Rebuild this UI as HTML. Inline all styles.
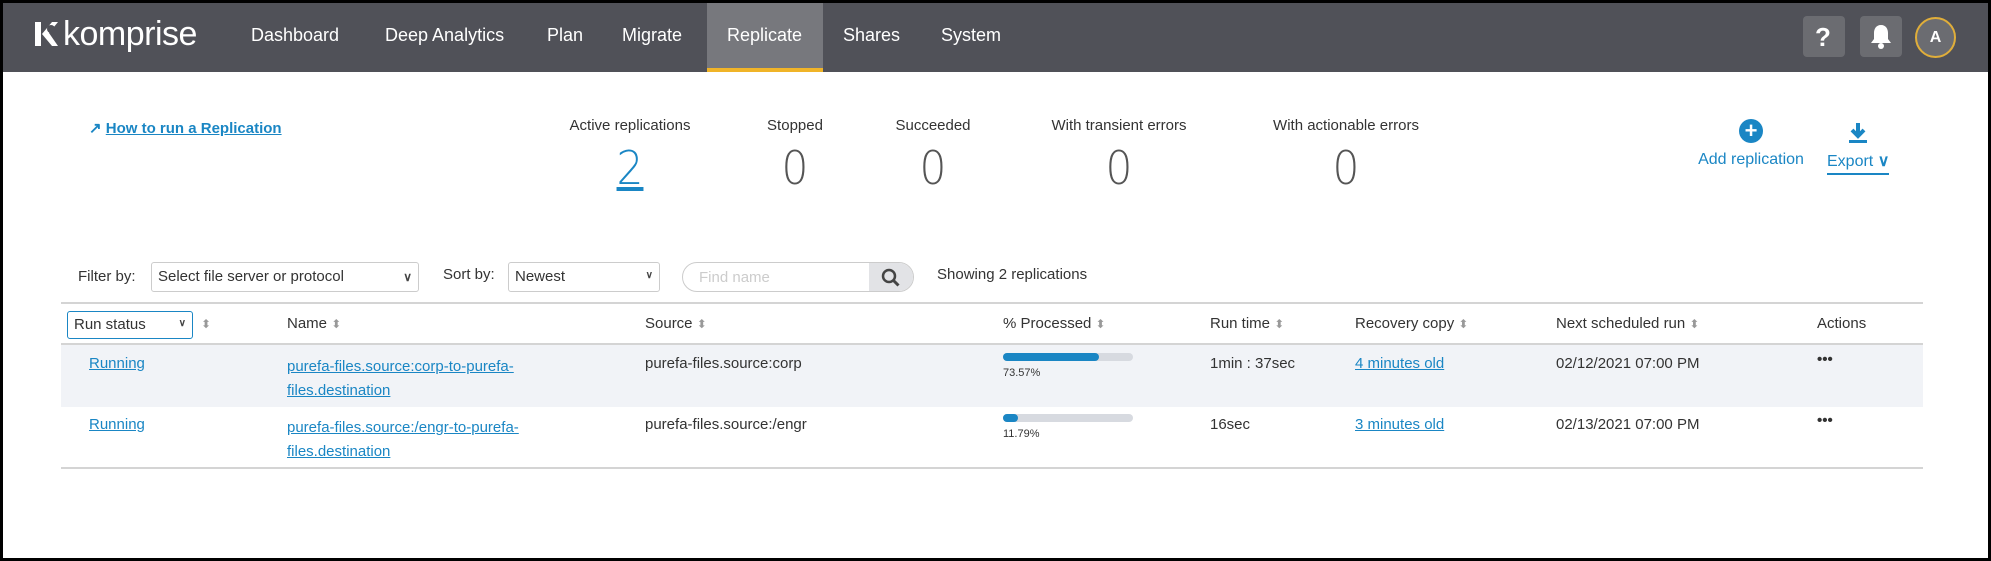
<!DOCTYPE html>
<html><head><meta charset="utf-8"><style>
*{box-sizing:border-box;margin:0;padding:0}
body{width:1991px;height:561px;background:#000;font-family:"Liberation Sans",sans-serif;position:relative;overflow:hidden}
.page{position:absolute;left:3px;top:3px;width:1985px;height:555px;background:#fff}
.hdr{position:absolute;left:0;top:0;width:1985px;height:69px;background:#505158}
.abs{position:absolute;white-space:nowrap}
.nav{color:#fff;font-size:18px;top:22px}
.tab{position:absolute;left:704px;top:0;width:116px;height:69px;background:#77787d;border-bottom:4px solid #f0b428}
.ib{position:absolute;top:13px;width:42px;height:41px;background:#6b6c71;border-radius:4px}
.lbl{font-size:15px;color:#333;transform:translateX(-50%)}
.num{font-size:46px;color:#555;font-family:"DejaVu Sans",sans-serif;font-weight:200;transform:translateX(-50%) scaleX(0.92);top:138px}
.t{font-size:15px;color:#333}
a,.lnk{color:#1a86c4 !important;text-decoration:underline}
.sel{position:absolute;border:1px solid #ccc;border-radius:3px;background:#fff;font-size:15px;color:#333;padding:5px 6px}
.line{position:absolute;left:58px;width:1862px;height:2px;background:#d4d4d4}
.bar{position:absolute;left:1000px;width:130px;height:8px;background:#d7dae0;border-radius:4px}
.bar i{display:block;height:8px;background:#1a86c4;border-radius:4px}
.pct{font-size:11px;color:#333;left:1000px}
.srt{color:#999;font-size:12px}
.ar{float:right;font-size:12px;font-weight:bold;color:#444;margin-top:2px}
</style></head><body><div class="page">
<div class="hdr">
<div class="tab"></div>
<svg class="abs" style="left:30px;top:17px" width="26" height="28" viewBox="0 0 26 28"><path d="M2 2h6v24H2zM9 14l10-12h6L16 13l9 13h-6z" fill="#fff"/><circle cx="18" cy="9" r="4" fill="#505158"/></svg>
<div class="abs" style="left:60px;top:12px;color:#fff;font-size:34px;letter-spacing:-0.5px">komprise</div>
<div class="abs nav" style="left:248px">Dashboard</div>
<div class="abs nav" style="left:382px">Deep Analytics</div>
<div class="abs nav" style="left:544px">Plan</div>
<div class="abs nav" style="left:619px">Migrate</div>
<div class="abs nav" style="left:724px">Replicate</div>
<div class="abs nav" style="left:840px">Shares</div>
<div class="abs nav" style="left:938px">System</div>
<div class="ib" style="left:1800px"><div class="abs" style="left:12px;top:6px;color:#fff;font-size:26px;font-weight:bold">?</div></div>
<div class="ib" style="left:1857px"><svg style="position:absolute;left:9px;top:7px" width="24" height="27" viewBox="0 0 24 27"><path d="M12 2c-5 0-7 4-7 8v6l-3 4h20l-3-4v-6c0-4-2-8-7-8z" fill="#fff"/><circle cx="12" cy="23" r="3" fill="#fff"/></svg></div>
<div class="abs" style="left:1912px;top:14px;width:41px;height:41px;border:2px solid #e0ae3a;border-radius:50%;background:#6b6c71;color:#fff;font-weight:bold;font-size:16px;text-align:center;line-height:37px">A</div>
</div>
<div class="abs" style="left:86px;top:116px;font-size:15px;font-weight:bold"><span style="color:#1a86c4">&#x2197;</span> <a>How to run a Replication</a></div>
<div class="abs lbl" style="left:627px;top:114px">Active replications</div>
<div class="abs lbl" style="left:792px;top:114px">Stopped</div>
<div class="abs lbl" style="left:930px;top:114px">Succeeded</div>
<div class="abs lbl" style="left:1116px;top:114px">With transient errors</div>
<div class="abs lbl" style="left:1343px;top:114px">With actionable errors</div>
<div class="abs num" style="left:627px;color:#1a86c4;text-decoration:underline">2</div>
<div class="abs num" style="left:792px">0</div>
<div class="abs num" style="left:930px">0</div>
<div class="abs num" style="left:1116px">0</div>
<div class="abs num" style="left:1343px">0</div>
<div class="abs" style="left:1736px;top:116px;width:24px;height:24px;border-radius:50%;background:#1a86c4;color:#fff;font-weight:bold;font-size:22px;line-height:24px;text-align:center">+</div>
<div class="abs" style="left:1748px;top:148px;transform:translateX(-50%);color:#1a86c4;font-size:16px">Add replication</div>
<svg class="abs" style="left:1844px;top:118px" width="22" height="24" viewBox="0 0 22 24"><path d="M11 2v12M5 9l6 6 6-6" stroke="#1a86c4" stroke-width="4" fill="none"/><rect x="2" y="19" width="18" height="3" fill="#1a86c4"/></svg>
<div class="abs" style="left:1824px;top:148px;color:#1a86c4;font-size:16px;border-bottom:2px solid #1a86c4;padding-bottom:2px">Export <b>&#x2228;</b></div>
<div class="abs t" style="left:75px;top:265px">Filter by:</div>
<div class="sel" style="left:148px;top:259px;width:268px;height:30px">Select file server or protocol <span class="ar">&#x2228;</span></div>
<div class="abs t" style="left:440px;top:263px">Sort by:</div>
<div class="sel" style="left:505px;top:259px;width:152px;height:30px">Newest <span class="ar" style="font-size:10px">&#x2228;</span></div>
<div class="abs" style="left:679px;top:259px;width:232px;height:30px;border:1px solid #ccc;border-radius:15px;overflow:hidden"><div class="abs" style="left:16px;top:6px;color:#ccc;font-size:15px">Find name</div><div class="abs" style="right:0;top:0;width:44px;height:30px;background:#e2e3e6"><svg style="position:absolute;left:12px;top:5px" width="20" height="20" viewBox="0 0 20 20"><circle cx="8" cy="8" r="6" stroke="#444" stroke-width="2.5" fill="none"/><path d="M12.5 12.5l5 5" stroke="#444" stroke-width="3"/></svg></div></div>
<div class="abs t" style="left:934px;top:263px">Showing 2 replications</div>
<div class="line" style="top:299px"></div>
<div class="sel" style="left:64px;top:308px;width:126px;height:28px;border-color:#1a86c4;padding:4px 6px">Run status <span class="ar" style="font-size:10px">&#x2228;</span></div>
<div class="abs srt" style="left:198px;top:314px">&#x2B0D;</div>
<div class="abs t" style="left:284px;top:312px">Name <span class="srt">&#x2B0D;</span></div>
<div class="abs t" style="left:642px;top:312px">Source <span class="srt">&#x2B0D;</span></div>
<div class="abs t" style="left:1000px;top:312px">% Processed <span class="srt">&#x2B0D;</span></div>
<div class="abs t" style="left:1207px;top:312px">Run time <span class="srt">&#x2B0D;</span></div>
<div class="abs t" style="left:1352px;top:312px">Recovery copy <span class="srt">&#x2B0D;</span></div>
<div class="abs t" style="left:1553px;top:312px">Next scheduled run <span class="srt">&#x2B0D;</span></div>
<div class="abs t" style="left:1814px;top:312px">Actions</div>
<div class="line" style="top:340px"></div>
<div class="abs" style="left:58px;top:342px;width:1862px;height:62px;background:#f1f3f7"></div>
<div class="abs t lnk" style="left:86px;top:352px">Running</div>
<div class="abs t lnk" style="left:284px;top:352px;line-height:24px">purefa-files.source:corp-to-purefa-<br>files.destination</div>
<div class="abs t" style="left:642px;top:352px">purefa-files.source:corp</div>
<div class="bar" style="top:350px"><i style="width:96px"></i></div>
<div class="abs pct" style="top:364px">73.57%</div>
<div class="abs t" style="left:1207px;top:352px">1min : 37sec</div>
<div class="abs t lnk" style="left:1352px;top:352px">4 minutes old</div>
<div class="abs t" style="left:1553px;top:352px">02/12/2021 07:00 PM</div>
<div class="abs t" style="left:1814px;top:348px;font-weight:bold">&#8226;&#8226;&#8226;</div>
<div class="abs t lnk" style="left:86px;top:413px">Running</div>
<div class="abs t lnk" style="left:284px;top:413px;line-height:24px">purefa-files.source:/engr-to-purefa-<br>files.destination</div>
<div class="abs t" style="left:642px;top:413px">purefa-files.source:/engr</div>
<div class="bar" style="top:411px"><i style="width:15px"></i></div>
<div class="abs pct" style="top:425px">11.79%</div>
<div class="abs t" style="left:1207px;top:413px">16sec</div>
<div class="abs t lnk" style="left:1352px;top:413px">3 minutes old</div>
<div class="abs t" style="left:1553px;top:413px">02/13/2021 07:00 PM</div>
<div class="abs t" style="left:1814px;top:409px;font-weight:bold">&#8226;&#8226;&#8226;</div>
<div class="line" style="top:464px"></div>
</div></body></html>
